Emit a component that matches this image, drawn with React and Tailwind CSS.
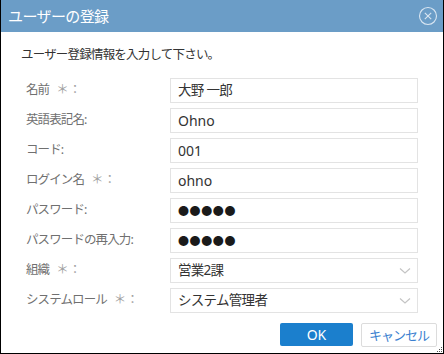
import { useState } from "react";

const rows = [
    { label: "名前", required: true, value: "大野 一郎" },
    { label: "英語表記名:", value: "Ohno", latin: true },
    { label: "コード:", value: "001", latin: true },
    { label: "ログイン名", required: true, value: "ohno", latin: true },
    { label: "パスワード:", value: "●●●●●", secret: true },
    { label: "パスワードの再入力:", value: "●●●●●", secret: true },
    { label: "組織", required: true, value: "営業2課", select: true },
    { label: "システムロール", required: true, value: "システム管理者", select: true },
];

function Chevron() {
    return (
        <svg width="12" height="8" viewBox="0 0 12 8" className="shrink-0">
            <path d="M1 1.5 L6 6 L11 1.5" fill="none" stroke="#c4c4c4" strokeWidth="1.2" />
        </svg>
    );
}

function valueClass(r) {
    if (r.secret) return "text-[11px] text-[#1a1a1a] tracking-[0.6px] leading-none";
    if (r.latin) return "text-[14px] text-[#333] leading-none";
    return "text-[13.5px] tracking-[-0.7px] text-[#333] leading-none";
}

export default function App() {
    const [form] = useState(rows);

    return (
        <div
            className="w-[444px] h-[354px] bg-white border-x border-b border-black flex flex-col relative overflow-hidden"
            style={{ fontFamily: '"Noto Sans", "Noto Sans CJK JP", sans-serif' }}
        >
            <div className="h-[32px] bg-[#6b9dc7] flex items-center justify-between pl-[7px] pr-[5px] shrink-0">
                <span className="text-white text-[15px] tracking-[-0.6px] leading-none">ユーザーの登録</span>
                <svg width="20" height="20" viewBox="0 0 20 20">
                    <circle cx="10" cy="10" r="8.5" fill="none" stroke="#d9e6f2" strokeWidth="1.1" />
                    <path d="M6.8 6.8 L13.2 13.2 M13.2 6.8 L6.8 13.2" stroke="#d9e6f2" strokeWidth="1.1" />
                </svg>
            </div>

            <div className="px-[20px] pt-[13px] text-[12.5px] tracking-[-0.8px] text-[#333] leading-[20px]">
                ユーザー登録情報を入力して下さい。
            </div>

            <div className="flex flex-col gap-[5px] mt-[13px] pl-[25px] pr-[25px]">
                {form.map((r) => (
                    <div key={r.label} className="flex items-center h-[25px]">
                        <div className="w-[144px] text-[12.5px] tracking-[-0.9px] text-[#707070] whitespace-nowrap">
                            {r.label}
                            {r.required && <span className="text-[#a0a0a0] ml-[7px] tracking-[0px]">＊：</span>}
                        </div>
                        <div className="flex-1 h-[25px] border border-[#e3e3e3] flex items-center justify-between pl-[7px] pr-[6px]">
                            <span className={valueClass(r)}>{r.value}</span>
                            {r.select && <Chevron />}
                        </div>
                    </div>
                ))}
            </div>

            <div className="flex justify-end gap-[8px] mt-[10px] pr-[6px]">
                <button className="w-[73px] h-[23px] bg-[#1b7fcd] rounded-[2px] text-white text-[14px] leading-none">
                    OK
                </button>
                <button className="w-[76px] h-[24px] border border-[#dcdcdc] rounded-[2px] text-[#3b7fd0] text-[13px] tracking-[-1px] leading-none bg-white">
                    キャンセル
                </button>
            </div>

            <div className="absolute right-[1px] bottom-[1px] grid grid-cols-3 gap-[1px]">
                <span className="w-[1px] h-[1px]" />
                <span className="w-[1px] h-[1px]" />
                <span className="w-[1px] h-[1px] bg-[#555]" />
                <span className="w-[1px] h-[1px]" />
                <span className="w-[1px] h-[1px] bg-[#555]" />
                <span className="w-[1px] h-[1px] bg-[#555]" />
                <span className="w-[1px] h-[1px] bg-[#555]" />
                <span className="w-[1px] h-[1px] bg-[#555]" />
                <span className="w-[1px] h-[1px] bg-[#555]" />
            </div>
        </div>
    );
}
